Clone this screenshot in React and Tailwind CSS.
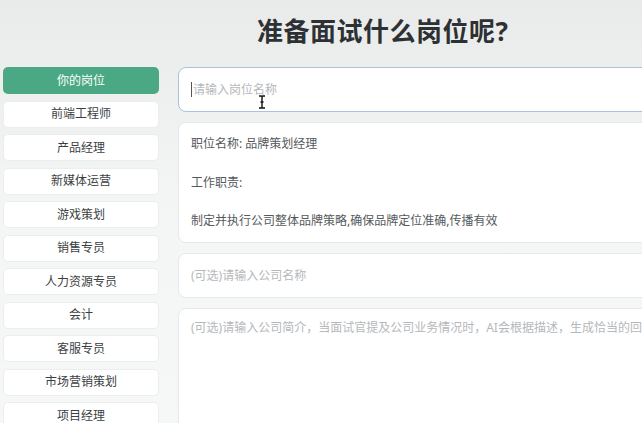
import React from 'react';

const roles = [
  '前端工程师',
  '产品经理',
  '新媒体运营',
  '游戏策划',
  '销售专员',
  '人力资源专员',
  '会计',
  '客服专员',
  '市场营销策划',
  '项目经理',
];

export default function App() {
  return (
    <div
      className="w-[642px] h-[423px] overflow-hidden bg-gradient-to-b from-[#e9ebeb] via-[#f4f6f6] to-[#f6f8f8]"
      style={{ fontFamily: '"Noto Sans", "Noto Sans CJK SC", sans-serif' }}
    >
      {/* Title */}
      <div className="h-[60px] flex items-center pl-[257px] pt-[2px]">
        <h1 className="text-[26px] font-bold text-[#2e3134] tracking-[0.5px] leading-none">
          准备面试什么岗位呢?
        </h1>
      </div>

      <div className="flex gap-[19px] pl-[3px] pt-[7px]">
        {/* Sidebar */}
        <div className="w-[156px] shrink-0 flex flex-col gap-[6.5px]">
          <div className="h-[27px] rounded-[5px] bg-[#4aa884] text-white text-[12px] flex items-center justify-center">
            你的岗位
          </div>
          {roles.map((r) => (
            <div
              key={r}
              className="h-[27px] rounded-[5px] bg-white border border-[#eceeee] text-[#3c3f42] text-[12px] flex items-center justify-center"
            >
              {r}
            </div>
          ))}
        </div>

        {/* Main */}
        <div className="w-[520px] shrink-0 flex flex-col gap-[10px]">
          <div className="relative h-[45px] rounded-[8px] bg-white border-[1.5px] border-[#a9c2de] flex items-center pl-[12px]">
            <span className="w-px h-[15px] bg-[#555] mr-[1px]" />
            <span className="text-[12px] text-[#b5b8bb]">请输入岗位名称</span>
            <svg className="absolute left-[79px] top-[27px]" width="8" height="14" viewBox="0 0 8 14">
              <path d="M1 1h2.2c.5 0 .8.3.8.8M7 1H4.8c-.5 0-.8.3-.8.8v10.4c0 .5-.3.8-.8.8H1M7 13H4.8c-.5 0-.8-.3-.8-.8M2.5 7h3" stroke="#111" strokeWidth="1.4" fill="none" />
            </svg>
          </div>

          <div className="rounded-[8px] bg-white border border-[#e6e9ea] px-[12px] pt-[12px] pb-[12px] flex flex-col gap-[20.5px] text-[12px] leading-[18px] text-[#55595c]">
            <div>职位名称: 品牌策划经理</div>
            <div>工作职责:</div>
            <div>制定并执行公司整体品牌策略,确保品牌定位准确,传播有效</div>
          </div>

          <div className="h-[45px] rounded-[8px] bg-white border border-[#e6e9ea] flex items-center px-[12px] text-[12px] text-[#b5b8bb]">
            (可选)请输入公司名称
          </div>

          <div className="h-[130px] rounded-[8px] bg-white border border-[#e6e9ea] px-[12px] pt-[10px] text-[12px] leading-[18px] text-[#b5b8bb] whitespace-nowrap">
            (可选)请输入公司简介，当面试官提及公司业务情况时，AI会根据描述，生成恰当的回答
          </div>
        </div>
      </div>
    </div>
  );
}
